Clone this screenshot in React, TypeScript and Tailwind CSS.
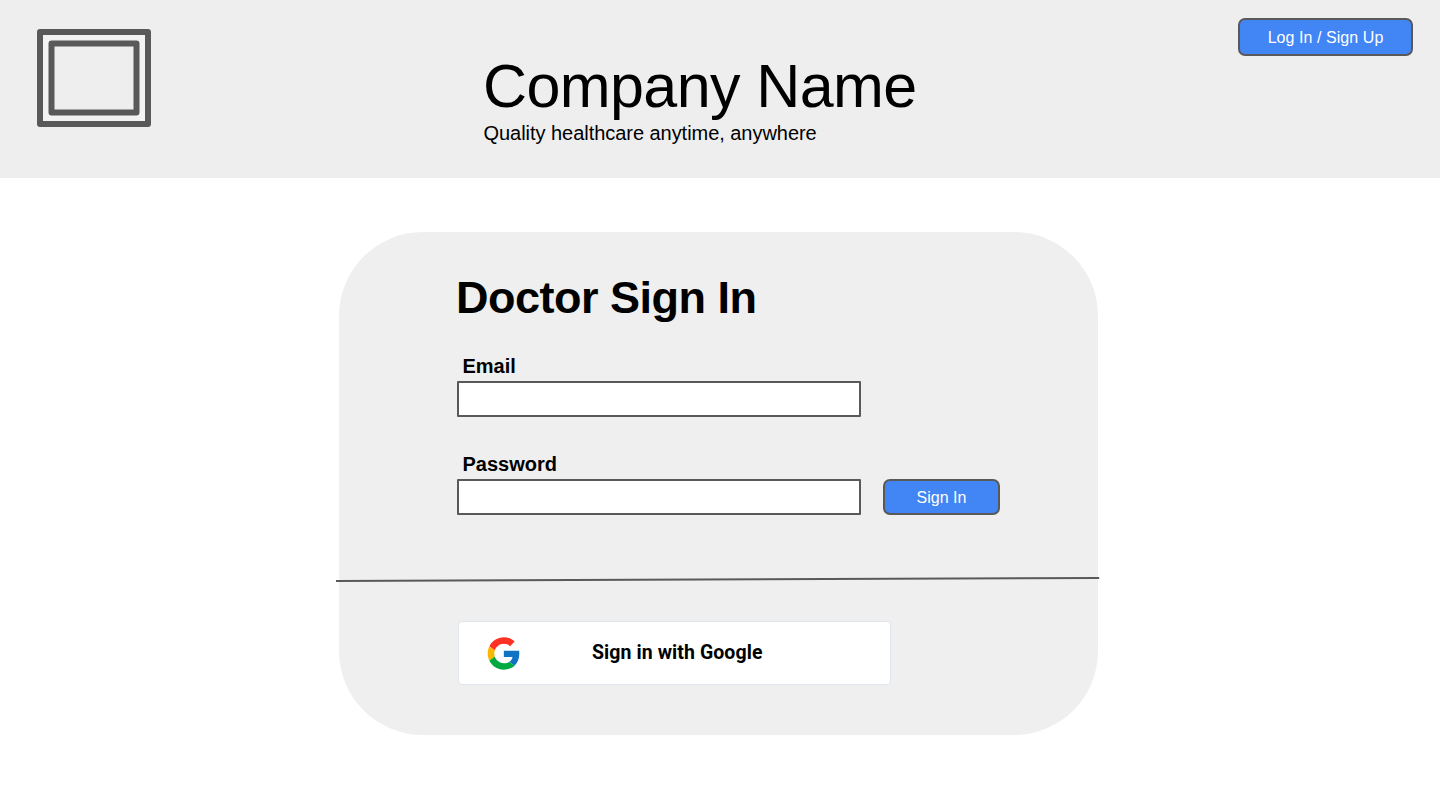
import React from "react";

function Logo() {
  return (
    <svg width="114" height="98" viewBox="0 0 114 98" fill="none" stroke="#595959" strokeLinejoin="round" strokeWidth="6">
      <rect x="3" y="3" width="108" height="92" fill="#f3f3f3" />
      <rect x="14.5" y="14.5" width="85" height="69" fill="#eeeeee" />
    </svg>
  );
}

function GoogleMark() {
  return (
    <svg width="33" height="33" viewBox="-1 -0.5 49 49">
      <path fill="#ff3024" d="M24 9.5c3.54 0 6.71 1.22 9.21 3.6l6.85-6.85C35.9 2.38 30.47 0 24 0 14.62 0 6.51 5.38 2.56 13.22l7.98 6.19C12.43 13.72 17.74 9.5 24 9.5z" />
      <path fill="#1272c4" d="M46.98 24.55c0-1.57-.15-3.09-.38-4.55H24v9.02h12.94c-.58 2.96-2.26 5.48-4.78 7.18l7.73 6c4.51-4.18 7.09-10.36 7.09-17.65z" />
      <path fill="#fbb800" d="M10.53 28.59c-.48-1.45-.76-2.99-.76-4.59s.27-3.14.76-4.59l-7.98-6.19C.92 16.46 0 20.12 0 24c0 3.88.92 7.54 2.56 10.78l7.97-6.19z" />
      <path fill="#00aa40" d="M24 48c6.48 0 11.93-2.13 15.89-5.81l-7.73-6c-2.15 1.45-4.92 2.3-8.16 2.3-6.26 0-11.57-4.22-13.47-9.91l-7.98 6.19C6.51 42.62 14.62 48 24 48z" />
    </svg>
  );
}

function Field({ label, type }: { label: string; type: string }) {
  return (
    <label className="flex w-[404px] flex-col">
      <span className="pl-[5.5px] text-xl leading-[30px] font-bold">{label}</span>
      <input type={type} className="h-9 w-full rounded-[1px] border-2 border-[#595959] bg-white px-2 outline-none" />
    </label>
  );
}

export default function App() {
  return (
    <div className="h-[810px] w-[1440px] overflow-hidden bg-white font-['Liberation_Sans',Arial,sans-serif] text-black">
      <header className="flex h-[178px] items-start bg-[#eeeeee]">
        <div className="w-[483px] pt-[29px] pl-[37px]">
          <Logo />
        </div>
        <div className="flex-1 pt-[51px]">
          <h1 className="text-[61px] leading-[71px] tracking-[-0.6px] whitespace-nowrap">Company Name</h1>
          <p className="pl-[0.5px] text-xl leading-[22px] tracking-[-0.04px]">Quality healthcare anytime, anywhere</p>
        </div>
        <button className="mt-[18px] mr-[27px] h-[38px] w-[175px] rounded-[7px] border-2 border-[#595959] bg-[#4285f4] pt-[2px] text-base tracking-[0.06px] text-white">
          Log In / Sign Up
        </button>
      </header>

      <main className="relative mt-[54px] ml-[339px] h-[503px] w-[759px] rounded-[84px] bg-[#efefef] pt-10 pl-[118px]">
        <h2 className="-ml-px text-[45px] leading-[51px] font-bold tracking-[-0.5px]">Doctor Sign In</h2>
        <form className="mt-7 flex flex-col gap-8">
          <Field label="Email" type="email" />
          <div className="flex items-end gap-[22px]">
            <Field label="Password" type="password" />
            <button type="button" className="h-9 w-[117px] rounded-[7px] border-2 border-[#595959] bg-[#4285f4] pt-[2px] text-base text-white">
              Sign In
            </button>
          </div>
        </form>
        <svg className="absolute top-[343px] -left-[3px]" width="764" height="8" viewBox="0 0 764 8">
          <path d="M0 6 L763.2 3" stroke="#595959" strokeWidth="2" />
        </svg>
        <button className="mt-[106px] ml-px flex h-16 w-[433px] items-center rounded-[4px] border border-[#dfe5ec] bg-white pl-7 font-[Roboto,sans-serif] text-[19.5px] font-bold tracking-[0.08px]">
          <GoogleMark />
          <span className="ml-[72px]">Sign in with Google</span>
        </button>
      </main>
    </div>
  );
}
